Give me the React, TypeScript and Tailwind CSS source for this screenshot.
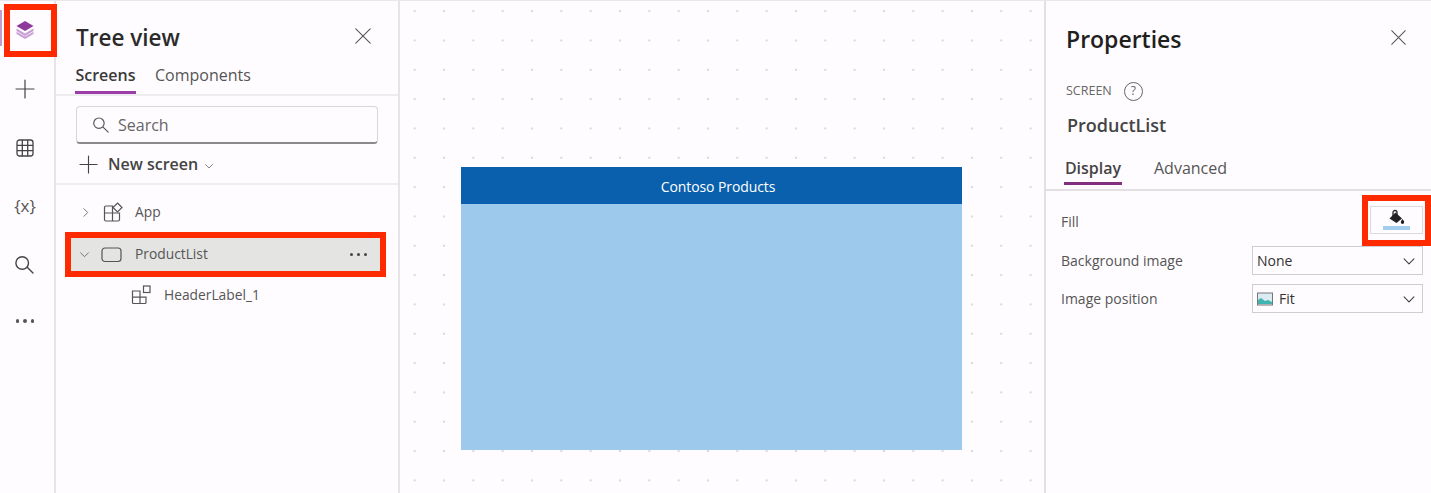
import React from "react";

const font = { fontFamily: '"Open Sans", "Noto Sans", sans-serif' };

function Line({ d, size = 20, w = 1.3, color = "#444" }: { d: string; size?: number; w?: number; color?: string }) {
  return (
    <svg width={size} height={size} viewBox="0 0 20 20" fill="none" stroke={color} strokeWidth={w} strokeLinecap="round" strokeLinejoin="round" className="shrink-0">
      <path d={d} />
    </svg>
  );
}

const Chevron = ({ dir = "down", size = 12, color = "#666" }: { dir?: "down" | "right"; size?: number; color?: string }) => (
  <Line size={size} color={color} w={1.6} d={dir === "down" ? "M3 7l7 7 7-7" : "M7 3l7 7-7 7"} />
);

function Rail() {
  return (
    <div className="w-[56px] shrink-0 border-r-2 border-[#e6e4e6] flex flex-col items-center pr-[4px] text-[#444] relative">
      <div className="absolute left-0 top-[9px] w-[2px] h-[36px] bg-[#c49ad2]" />
      <div className="mt-[3px] ml-[4px] self-start shrink-0 w-[53px] h-[53px] border-[6px] border-[#ff2a00] flex items-center justify-start pl-[5px] pb-[2px]">
        <svg width="20" height="20" viewBox="0 0 20 20">
          <path d="M10 13.500L1.500 8.600V11l8.500 5 8.500-5V8.600z" fill="#c9a0d3" />
          <path d="M10 16.600L1.500 11.700v2.200l8.500 5 8.500-5v-2.200z" fill="#c9a0d3" />
          <path d="M10 1L1.500 6 10 11l8.500-5z" fill="#8e3a9d" />
        </svg>
      </div>
      <div className="mt-[22px]"><Line size={20} w={1.2} d="M10 1v18M1 10h18" /></div>
      <div className="mt-[40px]">
        <svg width="18" height="18" viewBox="0 0 18 18" fill="none" stroke="#444" strokeWidth="1.3" className="block">
          <rect x="1" y="1" width="16" height="16" rx="2.500" />
          <path d="M6.300 1v16M11.700 1v16M1 6.300h16M1 11.700h16" />
        </svg>
      </div>
      <div className="mt-[36px] h-[24px] flex items-center text-[17px] leading-none text-[#555]">{"{x}"}</div>
      <div className="mt-[38px]">
        <Line size={20} w={1.4} d="M12.200 12.200l5.800 5.800M13.500 8a6.300 6.300 0 1 1-12.600 0 6.300 6.300 0 0 1 12.600 0z" />
      </div>
      <div className="mt-[44px] flex gap-[4px]">
        <span className="w-[3.500px] h-[3.500px] rounded-full bg-[#555]" />
        <span className="w-[3.500px] h-[3.500px] rounded-full bg-[#555]" />
        <span className="w-[3.500px] h-[3.500px] rounded-full bg-[#555]" />
      </div>
    </div>
  );
}

function TreePanel() {
  return (
    <div className="w-[344px] shrink-0 border-r-2 border-[#e6e4e6] flex flex-col">
      <div className="h-[64px] flex items-start justify-between pl-[20px] pr-[26px]">
        <div className="mt-[20px] text-[22.500px] leading-[34px] font-semibold text-[#2b2b2b]">Tree view</div>
        <div className="mt-[26px]"><Line size={18} w={1.2} color="#555" d="M2 2l16 16M18 2L2 18" /></div>
      </div>
      <div className="h-[31px] flex gap-[19px] pl-[19px] border-b-2 border-[#eeecee] text-[16px] leading-[20px]">
        <div className="w-[61px] h-[29px] border-b-[3px] border-[#9b3ea8] font-semibold text-[#3a3a3a] text-center">Screens</div>
        <div className="text-[#555]">Components</div>
      </div>
      <div className="ml-[20px] mt-[10px] w-[302px] h-[38px] rounded-[4px] border border-[#d8d6d8] border-b-2 border-b-[#8a8a8a] flex items-center pl-[15px] gap-[8px] text-[16px] text-[#666]">
        <Line size={18} w={1.3} color="#555" d="M12 12l6 6M13.500 8a5.800 5.800 0 1 1-11.600 0 5.800 5.800 0 0 1 11.600 0z" />
        Search
      </div>
      <div className="ml-[23px] mt-[7px] h-[26px] flex items-center text-[16px] font-semibold text-[#444]">
        <Line size={19} w={1.2} d="M10 1v18M1 10h18" />
        <span className="ml-[10px]">New screen</span>
        <span className="ml-[6px] mt-[3px]"><Chevron size={10} /></span>
      </div>
      <div className="mt-[6px] border-t-2 border-[#eeecee] pt-[7px] flex flex-col text-[13.800px] text-[#555]">
        <div className="h-[40px] flex items-center pl-[24px]">
          <Chevron dir="right" size={11} />
          <svg width="20" height="20" viewBox="0 0 20 20" fill="none" stroke="#555" strokeWidth="1.2" className="ml-[12px]">
            <path d="M9.500 4H3a1.500 1.500 0 0 0-1.500 1.500v12A1.500 1.500 0 0 0 3 19h12a1.500 1.500 0 0 0 1.500-1.500V11H9.500zM1.500 11h8v8" />
            <path d="M14.500 1l4.500 4.500-4.500 4.500L10 5.500z" />
          </svg>
          <span className="ml-[12px]">App</span>
        </div>
        <div className="ml-[9px] w-[321px] h-[45px] border-[6px] border-[#ff2a00] bg-[#e4e4e3] flex items-center pl-[8px] pr-[13px]">
          <Chevron size={11} />
          <svg width="21" height="16" viewBox="0 0 21 16" fill="none" stroke="#555" strokeWidth="1.2" className="ml-[11px]">
            <rect x="1" y="1" width="19" height="13.500" rx="3" />
          </svg>
          <span className="ml-[13px]">ProductList</span>
          <span className="ml-auto flex gap-[4px]">
            <span className="w-[3px] h-[3px] rounded-full bg-[#444]" />
            <span className="w-[3px] h-[3px] rounded-full bg-[#444]" />
            <span className="w-[3px] h-[3px] rounded-full bg-[#444]" />
          </span>
        </div>
        <div className="h-[36px] flex items-center pl-[75px]">
          <svg width="20" height="20" viewBox="0 0 20 20" fill="none" stroke="#555" strokeWidth="1.2">
            <path d="M1.500 6h7.500v12.500H2.500a1 1 0 0 1-1-1zM1.500 12.200h13.500v5.300a1 1 0 0 1-1 1H9" />
            <rect x="12.500" y="1" width="6.500" height="6.500" />
          </svg>
          <span className="ml-[13px]">HeaderLabel_1</span>
        </div>
      </div>
    </div>
  );
}

function Canvas() {
  return (
    <div className="flex-1 border-r-2 border-[#e2e0e2] pl-[61px] pt-[166px] bg-[radial-gradient(circle,#d9d7d9_1px,transparent_1.4px)] bg-[length:29.330px_29.330px] bg-[position:0px_-4.500px]">
      <div className="w-[501px] h-[283px] bg-[#9dcaec] flex flex-col">
        <div className="h-[37px] bg-[#0a60ac] flex items-center justify-center text-white text-[14px] font-medium tracking-[-0.1px] pl-[13px] pt-[1px]">Contoso Products</div>
      </div>
    </div>
  );
}

function Select({ children }: { children: React.ReactNode }) {
  return (
    <div className="w-[171px] h-[29px] border border-[#cfcdcf] flex items-center pl-[4px] pr-[6px] text-[14px] text-[#333]">
      {children}
      <span className="ml-auto"><Chevron size={14} color="#444" /></span>
    </div>
  );
}

function Properties() {
  return (
    <div className="w-[385px] shrink-0 flex flex-col">
      <div className="flex items-start justify-between pl-[20px] pr-[24px] pt-[21px]">
        <div className="text-[23px] leading-[34px] font-semibold text-[#1f1f1f]">Properties</div>
        <div className="mt-[7px]"><Line size={17} w={1.2} color="#555" d="M2 2l16 16M18 2L2 18" /></div>
      </div>
      <div className="pl-[20px] mt-[23px] h-[24px] flex items-center text-[12.500px] text-[#666]">
        SCREEN
        <span className="ml-[12px] w-[19px] h-[19px] rounded-full border border-[#666] flex items-center justify-center text-[12px] leading-none">?</span>
      </div>
      <div className="pl-[21px] mt-[10px] text-[18px] leading-[24px] font-semibold text-[#444]">ProductList</div>
      <div className="mt-[19px] h-[35px] flex gap-[32px] pl-[2px] border-b-2 border-[#e2e0e2] text-[16px] leading-[24px]">
        <div className="ml-[16px] w-[58px] h-[29px] border-b-[3px] border-[#80307f] text-[#444] font-semibold text-center">Display</div>
        <div className="text-[#555]">Advanced</div>
      </div>
      <div className="flex items-start justify-between pl-[15px] mt-[4px] h-[51px]">
        <span className="mt-[17px] text-[14px] leading-[20px] text-[#555]">Fill</span>
        <div className="w-[69px] h-[51px] border-[6px] border-[#ff2a00] pt-[5px] px-[2px] pb-[6px]">
          <div className="h-full border border-[#dcdadc] flex flex-col items-center pt-[2px]">
            <svg width="17" height="16" viewBox="0 0 17 16" className="block">
              <path d="M5 7V3.500a2 2 0 0 1 4 0V7" fill="none" stroke="#222" strokeWidth="1.300" />
              <path d="M7.500 3.500L14 9.500l-5.500 4.500L1.500 9.500z" fill="#222" />
              <path d="M14.500 10c1 1.500 1.700 2.200 1.700 3.200a1.700 1.700 0 0 1-3.400 0c0-1 .7-1.700 1.700-3.200z" fill="#222" />
            </svg>
            <div className="mt-[1px] w-[27px] h-[4px] bg-[#a5cdee]" />
          </div>
        </div>
      </div>
      <div className="flex items-center pl-[15px] h-[29px]">
        <span className="w-[191px] text-[14px] text-[#555]">Background image</span>
        <Select>None</Select>
      </div>
      <div className="flex items-center pl-[15px] mt-[9px] h-[29px]">
        <span className="w-[191px] text-[14px] text-[#555]">Image position</span>
        <Select>
          <svg width="16" height="14" viewBox="0 0 16 14" className="mr-[6px]">
            <rect x="0.500" y="1" width="15" height="12" fill="#dcebf2" stroke="#777" />
            <path d="M1 12V8l3-2 4 3 3-1 4 2v2z" fill="#3fb3b0" />
          </svg>
          Fit
        </Select>
      </div>
    </div>
  );
}

export default function App() {
  return (
    <div style={font} className="w-[1431px] h-[493px] overflow-hidden flex bg-[#fffcff] border-t border-[#e8e6e8]">
      <Rail />
      <TreePanel />
      <Canvas />
      <Properties />
    </div>
  );
}
